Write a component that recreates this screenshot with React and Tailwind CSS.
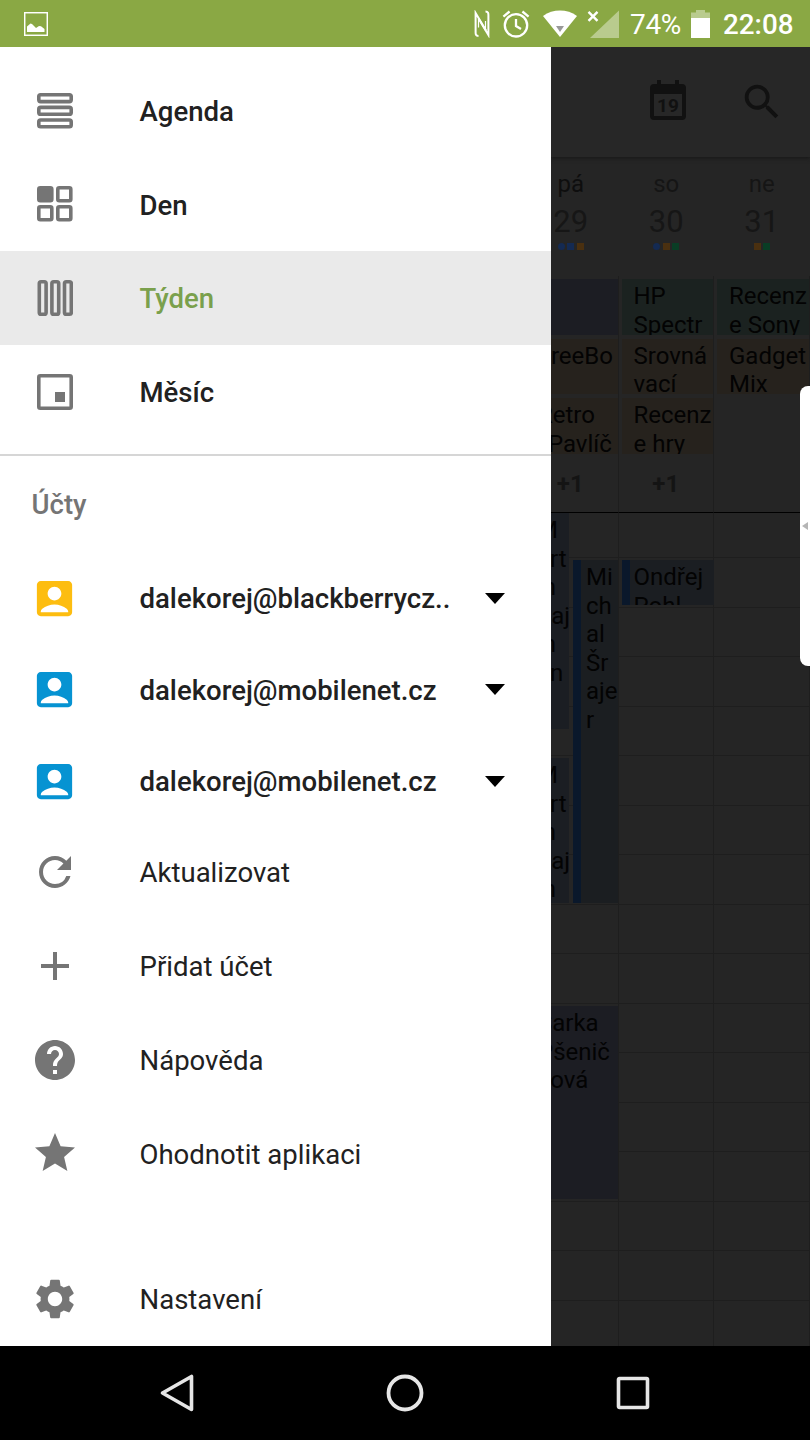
import React from 'react'

import {
  MdAccountBox,
  MdAdd,
  MdHelp,
  MdRefresh,
  MdSearch,
  MdSettings,
  MdStar,
} from 'react-icons/md'

const views = [
  { name: 'Agenda', icon: 'agenda' },
  { name: 'Den', icon: 'day' },
  { name: 'Týden', icon: 'week', active: true },
  { name: 'Měsíc', icon: 'month' },
]

const accounts = [
  { id: 1, name: 'dalekorej@blackberrycz..', color: 'text-[#fdbd10]' },
  { id: 2, name: 'dalekorej@mobilenet.cz', color: 'text-[#0693d2]' },
  { id: 3, name: 'dalekorej@mobilenet.cz', color: 'text-[#0693d2]' },
]

const actions = [
  { name: 'Aktualizovat', Icon: MdRefresh },
  { name: 'Přidat účet', Icon: MdAdd },
  { name: 'Nápověda', Icon: MdHelp },
  { name: 'Ohodnotit aplikaci', Icon: MdStar },
]

const PURPLE = 'bg-[#1c1d23]'
const TEAL = 'bg-[#1b2220]'
const BROWN = 'bg-[#26221d]'

const days = [
  {
    name: 'pá',
    number: 29,
    nameColor: 'text-[#0e0e0e]',
    dots: ['rounded-full bg-[#142a52]', 'bg-[#142a52]', 'bg-[#4a3010]'],
    allDay: [
      { color: PURPLE, lines: [] },
      { color: BROWN, lines: ['FreeBo'] },
      { color: BROWN, lines: ['Retro', '/Pavlíč'] },
    ],
    more: '+1',
    events: [
      {
        box: 'left-0 top-0 w-[46px] h-[216px] pl-[6px] bg-[#1b1e23]',
        lines: ['M', 'art', 'in', 'Šaj', 'in', 'an'],
      },
      {
        box: 'left-0 top-[245px] w-[46px] h-[145px] pl-[6px] bg-[#1b1e23]',
        lines: ['M', 'art', 'in', 'Šaj', 'in'],
      },
      {
        box: 'left-[50px] top-[47px] w-[45px] h-[343px] pl-[5px] bg-[#1b1e21]',
        lines: ['Mi', 'ch', 'al', 'Šr', 'aje', 'r'],
      },
      {
        box: 'left-0 top-[493px] w-[95px] h-[193px] pl-[7px] bg-[#1c1d23]',
        lines: ['Šarka', 'Pšenič', 'ková'],
      },
    ],
  },
  {
    name: 'so',
    number: 30,
    nameColor: 'text-[#151515]',
    dots: ['rounded-full bg-[#142a52]', 'bg-[#4a3010]', 'bg-[#093d25]'],
    allDay: [
      { color: TEAL, lines: ['HP', 'Spectr'] },
      { color: BROWN, lines: ['Srovná', 'vací'] },
      { color: BROWN, lines: ['Recenz', 'e hry'] },
    ],
    more: '+1',
    events: [
      {
        box: 'left-[3px] top-[47px] w-[92px] h-[45px] pl-1 bg-[#1b1e22]',
        lines: ['Ondřej', 'Pohl'],
      },
    ],
  },
  {
    name: 'ne',
    number: 31,
    nameColor: 'text-[#151515]',
    dots: ['bg-[#4a3010]', 'bg-[#093d25]'],
    allDay: [
      { color: TEAL, lines: ['Recenz', 'e Sony'] },
      { color: BROWN, lines: ['Gadget', 'Mix'] },
    ],
    events: [],
  },
]

const hours = Array.from({ length: 17 }, (_, i) => i)

const ViewIcon = ({ name }) => (
  <svg viewBox="0 0 36 36" className="size-9" fill="none" stroke="#757575" strokeWidth="3.6">
    {name === 'agenda' && (
      <>
        <rect x="1.8" y="1.8" width="32.4" height="6.8" rx="1.8" />
        <rect x="1.8" y="14.4" width="32.4" height="6.8" rx="1.8" />
        <rect x="1.8" y="27" width="32.4" height="6.8" rx="1.8" />
      </>
    )}
    {name === 'day' && (
      <>
        <rect x="1.8" y="1.8" width="13" height="13" rx="1.5" fill="#757575" />
        <rect x="20.8" y="1.8" width="13" height="13" rx="1.5" />
        <rect x="1.8" y="20.8" width="13" height="13" rx="1.5" />
        <rect x="20.8" y="20.8" width="13" height="13" rx="1.5" />
      </>
    )}
    {name === 'week' && (
      <>
        <rect x="2.3" y="1.8" width="6.8" height="32.4" rx="1.8" />
        <rect x="14.9" y="1.8" width="6.8" height="32.4" rx="1.8" />
        <rect x="27.5" y="1.8" width="6.8" height="32.4" rx="1.8" />
      </>
    )}
    {name === 'month' && (
      <>
        <rect x="1.8" y="1.8" width="32.4" height="32.4" rx="1.5" />
        <rect x="18" y="18" width="10" height="10" fill="#757575" stroke="none" />
      </>
    )}
  </svg>
)

const StatusBar = () => (
  <header className="flex h-[47px] items-center bg-[#8aa844] pr-4 pl-6 text-white">
    <svg viewBox="0 0 24 24" className="size-6" fill="none">
      <rect x="0.7" y="0.7" width="22.6" height="22.6" stroke="#fff" strokeWidth="1.5" />
      <path d="M3 20v-5.5l3.5-3 1.5.5 4 4 3-2 2 .3 3.5 2.7v3z" fill="#fff" />
    </svg>

    <svg viewBox="0 0 16 28" className="ml-auto h-7 w-4" fill="none" stroke="#fff">
      <path d="M4.5 26C1.5 26 1.6 24 1.6 22V3L12 20.5" strokeWidth="2" />
      <path d="M11.5 1.5c3 0 2.9 2 2.9 4V25L4.5 8.5" strokeWidth="2" />
      <path d="M4.5 8.5v9M11.5 11v9" strokeWidth="1.2" />
    </svg>
    <svg viewBox="0 0 28 28" className="ml-3 size-7" fill="none" stroke="#fff" strokeWidth="2.3">
      <circle cx="14" cy="15.3" r="11.2" />
      <path d="M14 9v7l5 3M1.4 6.7L7.6 1.5M26.6 6.7l-6.2-5.2" />
    </svg>
    <svg viewBox="0 0 36 28" className="ml-3 h-7 w-9">
      <path d="M1 6C11-1.3 25-1.3 35 6L18 27z" fill="#fff" />
      <path d="M14 16h8l-4 6z" fill="#999" />
    </svg>
    <svg viewBox="0 0 34 28" className="ml-[9px] h-7 w-[34px]">
      <path d="M32 .5V28H3z" fill="#b9cb8e" />
      <path d="M1.5 1.8l9 9M10.5 1.8l-9 9" stroke="#fff" strokeWidth="2.4" />
    </svg>
    <span className="ml-[9px] w-[52px] pt-[3px] text-[28px] leading-none tracking-[-0.3px]">
      74%
    </span>
    <svg viewBox="0 0 19 28" className="ml-[9px] h-7 w-[19px]">
      <path d="M0 8V2.5h5V0h9v2.5h5V8z" fill="#b9cb8e" />
      <path d="M0 8h19v20H0z" fill="#fff" />
    </svg>
    <span className="ml-[13px] w-[71px] pt-[3px] text-[27.8px] leading-none font-medium">
      22:08
    </span>
  </header>
)

const DrawerItem = ({ icon, name, className = '', children }) => (
  <li className={`flex items-center pr-[46px] ${className}`}>
    <span className="flex w-[110px] justify-center">{icon}</span>
    <span className="ml-[29.5px] pt-[2px]">{name}</span>
    {children}
  </li>
)

const Drawer = () => (
  <aside className="flex w-[551px] flex-none flex-col bg-white pt-4 text-[27.56px] leading-none text-[#212121]">
    <ul className="font-medium">
      {views.map(({ name, icon, active }) => (
        <DrawerItem
          key={name}
          name={name}
          icon={<ViewIcon name={icon} />}
          className={
            active ? 'h-[94px] bg-[#eaeaea] text-[#7aa04c]' : 'h-[93.75px] pt-[1.5px]'
          }
        />
      ))}
    </ul>

    <h2 className="mt-4 flex h-[98.5px] items-center border-t-2 border-[#d6d6d6] pt-[2px] pl-[31.5px] font-medium text-[#757575]">
      Účty
    </h2>

    <ul className="font-medium">
      {accounts.map(({ id, name, color }) => (
        <DrawerItem
          key={id}
          name={name}
          icon={<MdAccountBox className={`mr-px size-[47px] ${color}`} />}
          className="h-[91.5px]"
        >
          <svg viewBox="0 0 20 11" className="ml-auto h-[11px] w-5">
            <path d="M0 0h20L10 11z" fill="#000" />
          </svg>
        </DrawerItem>
      ))}
    </ul>

    <ul className="-mt-[1.5px]">
      {actions.map(({ name, Icon }) => (
        <DrawerItem
          key={name}
          name={name}
          icon={<Icon className="size-12 text-[#757575]" />}
          className="h-[93.75px]"
        />
      ))}
      <DrawerItem
        name="Nastavení"
        icon={<MdSettings className="size-12 text-[#757575]" />}
        className="mt-[52px] h-[93.75px]"
      />
    </ul>
  </aside>
)

const Toolbar = () => (
  <div className="z-10 flex h-[110px] flex-none items-start bg-[#272727] pl-[98px] shadow-[0_1px_4px_#161616]">
    <svg viewBox="0 0 38 42" className="mt-8 h-[42px] w-[38px]">
      <path
        d="M8 1h4v4h14V1h4v4h3a4 4 0 0 1 4 4v28a4 4 0 0 1-4 4H5a4 4 0 0 1-4-4V9a4 4 0 0 1 4-4h3zM5 15v22h28V15z"
        fill="#111"
      />
      <text
        x="19"
        y="32.5"
        textAnchor="middle"
        className="fill-[#111] font-['Roboto',sans-serif] text-[19px] font-bold"
      >
        19
      </text>
    </svg>
    <MdSearch className="mt-8 ml-[52px] size-[46px] text-[#111]" />
  </div>
)

const Lines = ({ lines }) =>
  lines.map((line, i) => (
    <div key={i} className="whitespace-nowrap">
      {line}
    </div>
  ))

const Day = ({ name, number, nameColor, dots, allDay, more, events }) => (
  <section className="flex w-[95.5px] flex-none flex-col">
    <div className="flex h-[119px] flex-col items-center pt-[13px]">
      <div className={`text-[24px] leading-7 ${nameColor}`}>{name}</div>
      <div className="mt-1.5 text-[31px] leading-9 text-[#161616]">{number}</div>
      <div className="mt-[3px] flex gap-[2.5px]">
        {dots.map((dot, i) => (
          <i key={i} className={`size-[7px] ${dot}`} />
        ))}
      </div>
    </div>

    <div className="flex h-[237px] flex-col gap-1 border-r border-b border-r-[#1e1e1e] border-b-black pt-[3px] text-[24px] leading-[28.6px] text-[#030303]">
      {allDay.map(({ color, lines }, i) => (
        <div
          key={i}
          className={`ml-[3px] h-[55.5px] flex-none overflow-hidden pt-[3px] pl-3 ${color}`}
        >
          <Lines lines={lines} />
        </div>
      ))}
      {more && <div className="mt-3 text-center font-bold text-[#141414]">{more}</div>}
    </div>

    <div className="relative flex-1 overflow-hidden text-[24px] leading-[28.6px] text-[#030303]">
      {hours.map((hour) => (
        <div
          key={hour}
          className="h-[49.5px] border-r border-b border-[#1e1e1e] first:h-[45px]"
        />
      ))}
      {events.map(({ box, lines }, i) => (
        <div
          key={i}
          className={`absolute overflow-hidden border-l-8 border-[#0a182b] pt-[3px] ${box}`}
        >
          <Lines lines={lines} />
        </div>
      ))}
    </div>
  </section>
)

const Calendar = () => (
  <main className="flex min-w-0 flex-1 flex-col overflow-hidden bg-[#252525]">
    <Toolbar />
    <div className="flex min-h-0 flex-1 justify-end pr-[0.5px]">
      {days.map((day) => (
        <Day key={day.number} {...day} />
      ))}
    </div>
  </main>
)

// Handle of the edge panel, it sits above the dimmed calendar
const EdgeHandle = () => (
  <div className="absolute top-[386px] right-0 z-20 flex h-[280px] w-[10px] items-center justify-end rounded-l-lg bg-white">
    <svg viewBox="0 0 6 8" className="mr-[2px] h-2 w-[6px]">
      <path d="M6 0v8L0 4z" fill="#b5b5b5" />
    </svg>
  </div>
)

const NavBar = () => (
  <nav className="flex h-[94px] items-center justify-between bg-black pr-[158px] pl-[159px]">
    <svg viewBox="0 0 38 38" className="size-[38px]" fill="none" stroke="#e6e6e6" strokeWidth="3.6">
      <path d="M32.5 2.5v33L3.5 19z" strokeLinejoin="round" />
    </svg>
    <svg
      viewBox="0 0 38 38"
      className="mr-[2px] size-[38px]"
      fill="none"
      stroke="#e6e6e6"
      strokeWidth="3.8"
    >
      <circle cx="19" cy="19" r="16.5" />
    </svg>
    <svg viewBox="0 0 38 38" className="size-[38px]" fill="none" stroke="#e6e6e6" strokeWidth="3.6">
      <rect x="4.5" y="4.5" width="29" height="29" rx="1" />
    </svg>
  </nav>
)

const App = () => (
  <div className="relative flex h-[1440px] w-[810px] flex-col overflow-hidden bg-black font-['Roboto',sans-serif]">
    <StatusBar />
    <div className="flex min-h-0 flex-1">
      <Drawer />
      <Calendar />
    </div>
    <NavBar />
    <EdgeHandle />
  </div>
)

export default App
